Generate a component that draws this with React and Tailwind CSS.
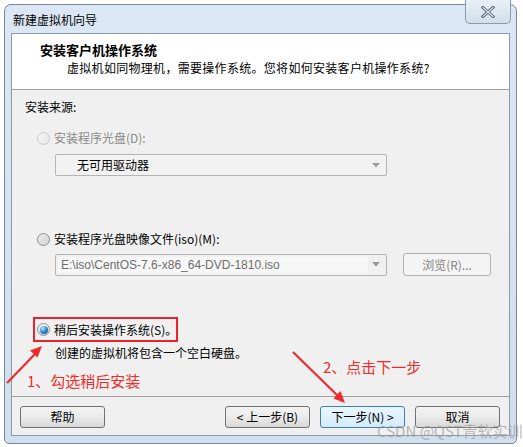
const font = { fontFamily: '"Noto Sans CJK SC", "Liberation Sans", sans-serif' };

function Radio({ checked, disabled }) {
  if (checked) {
    return (
      <span className="w-[13px] h-[13px] rounded-full border border-[#8e8f8f] bg-gradient-to-b from-[#f4f4f4] to-[#d8d8d8] flex items-center justify-center shrink-0">
        <span className="w-[8px] h-[8px] rounded-full bg-[radial-gradient(circle_at_35%_30%,#bfe6ff,#1e7fc9_55%,#0a4f8e)]" />
      </span>
    );
  }
  return (
    <span
      className={`w-[13px] h-[13px] rounded-full border shrink-0 bg-gradient-to-br ${
        disabled ? "border-[#c8c8c8] from-[#f8f8f8] to-[#e4e4e4]" : "border-[#8e8f8f] from-[#ececec] to-[#d4d4d4]"
      }`}
    />
  );
}

function Caret() {
  return (
    <svg width="8" height="5" viewBox="0 0 8 5" className="shrink-0">
      <path d="M0 0h8L4 4.5z" fill="#9a9a9a" />
    </svg>
  );
}

function WinButton({ children, primary }) {
  return (
    <div
      className={`w-[85px] h-[22px] rounded-[3px] border flex items-center justify-center text-[12px] text-black whitespace-nowrap ${
        primary
          ? "border-[#3c7fb1] bg-gradient-to-b from-[#eaf6fd] to-[#d4ebf8]"
          : "border-[#707070] bg-gradient-to-b from-[#f2f2f2] via-[#ebebeb] to-[#d8d8d8]"
      }`}
    >
      {children}
    </div>
  );
}

export default function App() {
  return (
    <div className="relative w-[523px] h-[447px] bg-white overflow-hidden" style={font}>
      <div className="ml-[4px] mt-[4px] w-[513px] h-[440px] rounded-t-[7px] rounded-b-[5px] border border-[#7a8898] bg-gradient-to-b from-[#dbe7f4] to-[#cfdff0] flex flex-col px-[6px] pb-[7px]">
        {/* 标题栏 */}
        <div className="h-[28px] flex items-start justify-between">
          <span className="mt-[6px] ml-[2px] text-[12px] text-black">新建虚拟机向导</span>
          <div className="-mt-[5px] -mr-[1px] w-[46px] h-[24px] rounded-b-[5px] border border-t-0 border-[#8c9bab] bg-gradient-to-b from-[#e9eff6] to-[#d3dfeb] flex items-center justify-center">
            <svg width="14" height="12" viewBox="0 0 14 12">
              <path d="M2 1.5l10 9M12 1.5l-10 9" stroke="#4d5b6a" strokeWidth="3" strokeLinecap="square" />
              <path d="M2 1.5l10 9M12 1.5l-10 9" stroke="#e8edf3" strokeWidth="1.2" strokeLinecap="square" />
            </svg>
          </div>
        </div>

        {/* 客户区 */}
        <div className="flex-1 border border-[#8e9aa7] bg-[#f0f0f0] flex flex-col">
          <div className="h-[56px] bg-white border-b border-[#a0a0a0] flex flex-col pl-[28px] pt-[7px]">
            <span className="text-[13px] font-bold text-black leading-[18px]">安装客户机操作系统</span>
            <span className="text-[12px] text-black leading-[18px] pl-[27px] tracking-[0.3px]">
              虚拟机如同物理机，需要操作系统。您将如何安装客户机操作系统?
            </span>
          </div>

          <div className="flex-1 flex flex-col pl-[13px] pr-[8px]">
            <span className="mt-[8px] text-[12px] leading-[18px] text-black">安装来源:</span>

            <div className="mt-[14px] ml-[12px] flex items-center gap-[4px] text-[12px] leading-[16px] text-[#8a8a8a]">
              <Radio disabled />
              <span>安装程序光盘(D):</span>
            </div>
            <div className="mt-[8px] ml-[30px] w-[332px] h-[22px] rounded-[2px] border border-[#b4b4b4] bg-[#f2f2f2] flex items-center justify-between pl-[21px] pr-[6px]">
              <span className="text-[12px] text-black">无可用驱动器</span>
              <Caret />
            </div>

            <div className="mt-[55px] ml-[12px] flex items-center gap-[4px] text-[12px] leading-[16px] text-black">
              <Radio />
              <span>安装程序光盘映像文件(iso)(M):</span>
            </div>
            <div className="mt-[6px] ml-[30px] flex items-center gap-[16px]">
              <div className="w-[332px] h-[22px] rounded-[2px] border border-[#b4b4b4] bg-[#f0f0f0] flex items-center justify-between p-[2px] pr-[6px]">
                <span className="w-[310px] h-[16px] bg-[#f7f7f7] text-[12px] leading-[16px] text-[#6d6d6d] pl-[3px]" style={{ fontFamily: '"Liberation Sans", sans-serif' }}>
                  E:\iso\CentOS-7.6-x86_64-DVD-1810.iso
                </span>
                <Caret />
              </div>
              <div className="w-[88px] h-[23px] rounded-[3px] border border-[#adb2b5] bg-[#f4f4f4] flex items-center justify-center text-[12px] text-[#838383]">
                浏览(R)...
              </div>
            </div>

            <div className="mt-[41px] ml-[8px] self-start h-[25px] w-[145px] border-2 border-[#e8232b] flex items-center gap-[4px] pl-[2px] text-[12px] text-black whitespace-nowrap">
              <Radio checked />
              <span>稍后安装操作系统(S)。</span>
            </div>
            <span className="mt-[2px] ml-[30px] text-[12px] leading-[18px] text-black">创建的虚拟机将包含一个空白硬盘。</span>
          </div>

          {/* 按钮栏 */}
          <div className="mx-[0px] border-t border-[#a0a0a0] flex items-center justify-between pl-[8px] pr-[9px] pt-[9px] pb-[7px]">
            <WinButton>帮助</WinButton>
            <div className="flex gap-[10px]">
              <WinButton>&lt; 上一步(B)</WinButton>
              <WinButton primary>下一步(N) &gt;</WinButton>
              <WinButton>取消</WinButton>
            </div>
          </div>
        </div>
      </div>

      {/* 标注 */}
      <svg className="absolute inset-0 pointer-events-none" width="523" height="447">
        <line x1="7" y1="383" x2="36" y2="353" stroke="#ee2a2a" strokeWidth="2.2" />
        <path d="M42 346l-12 4.5 7.5 7z" fill="#ee2a2a" />
        <line x1="293" y1="352" x2="338" y2="396" stroke="#ee2a2a" strokeWidth="2.2" />
        <path d="M345 403l-4.5-12-7 7.5z" fill="#ee2a2a" />
      </svg>
      <span className="absolute left-[27px] top-[371px] text-[15px] leading-[20px] text-[#ee2a2a]">1、勾选稍后安装</span>
      <span className="absolute left-[323px] top-[357px] text-[15px] leading-[20px] text-[#ee2a2a]">2、点击下一步</span>
      <span className="absolute left-[377px] top-[421px] text-[15px] leading-[20px] text-[#9a9a9a]/70 whitespace-nowrap">
        CSDN @QST青软实训
      </span>
    </div>
  );
}
